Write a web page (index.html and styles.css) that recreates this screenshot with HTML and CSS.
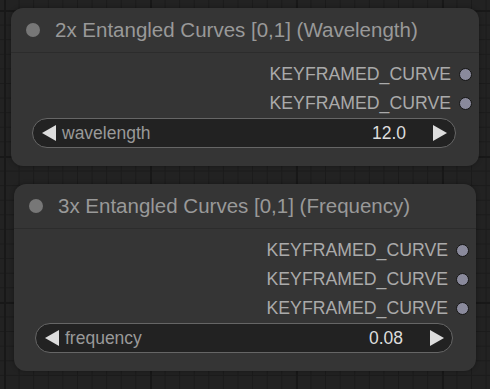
FILE: index.html
```html
<!DOCTYPE html>
<html lang="en">
<head>
  <meta charset="UTF-8">
  <title>nodes</title>
  <link rel="stylesheet" href="styles.css">
</head>
<body>
<div class="canvas">

  <div class="node node-wave">
    <div class="title">
      <span class="title-dot"></span>
      <span class="title-text">2x Entangled Curves [0,1] (Wavelength)</span>
    </div>
    <div class="body">
      <div class="output"><span>KEYFRAMED_CURVE</span><i class="slot"></i></div>
      <div class="output"><span>KEYFRAMED_CURVE</span><i class="slot"></i></div>
      <div class="widget">
        <span class="arrow left"></span>
        <span class="label">wavelength</span>
        <span class="value">12.0</span>
        <span class="arrow right"></span>
      </div>
    </div>
  </div>

  <div class="node node-freq">
    <div class="title">
      <span class="title-dot"></span>
      <span class="title-text">3x Entangled Curves [0,1] (Frequency)</span>
    </div>
    <div class="body">
      <div class="output"><span>KEYFRAMED_CURVE</span><i class="slot"></i></div>
      <div class="output"><span>KEYFRAMED_CURVE</span><i class="slot"></i></div>
      <div class="output"><span>KEYFRAMED_CURVE</span><i class="slot"></i></div>
      <div class="widget">
        <span class="arrow left"></span>
        <span class="label">frequency</span>
        <span class="value">0.08</span>
        <span class="arrow right"></span>
      </div>
    </div>
  </div>

</div>
</body>
</html>
```

FILE: styles.css
```css
* {
  box-sizing: border-box;
  font-family: "Liberation Sans", Arial, sans-serif;
}
html, body {
  margin: 0;
  height: 100%;
}
body {
  background-color: #222;
  background-image:
    linear-gradient(90deg, #181818 2px, transparent 2px),
    linear-gradient(#181818 2px, transparent 2px),
    linear-gradient(90deg, #1b1b1b 1px, transparent 1px),
    linear-gradient(#1b1b1b 1px, transparent 1px);
  background-size: 146px 146px, 146px 146px, 14.6px 14.6px, 14.6px 14.6px;
  background-position: 4px 10px, 4px 10px, 4px 10px, 4px 10px;
  overflow: hidden;
}
.canvas {
  display: flex;
  flex-direction: column;
  padding-top: 8px;
}
.node {
  background: #353535;
  border-radius: 12px;
  box-shadow: 0 0 4px rgba(0,0,0,.35);
}
.node-wave {
  margin-left: 11px;
  width: 468px;
}
.node-freq {
  margin-top: 18px;
  margin-left: 14px;
  width: 462px;
}
.title {
  height: 45px;
  display: flex;
  align-items: center;
  border-bottom: 1px solid #2c2c2c;
}
.title-dot {
  width: 14px;
  height: 14px;
  border-radius: 50%;
  background: #777;
  margin-left: 15px;
}
.title-text {
  margin-left: 15px;
  font-size: 20.5px;
  color: #999;
  white-space: nowrap;
}
.body {
  padding: 7px 23px 18px 21px;
}
.output {
  height: 29px;
  display: flex;
  align-items: center;
  justify-content: flex-end;
  margin-right: -16px;
  font-size: 17.7px;
  color: #aaa;
}
.slot {
  width: 13px;
  height: 13px;
  border-radius: 50%;
  background: #8a8a9c;
  border: 1.5px solid #151515;
  margin-left: 8px;
}
.widget {
  height: 30px;
  border: 1px solid #666;
  border-radius: 15px;
  background: #222;
  display: flex;
  align-items: center;
  padding: 0 8px 0 9px;
  font-size: 17.5px;
}
.label {
  color: #999;
  margin-left: 6px;
  flex: 1;
}
.value {
  color: #ddd;
  margin-right: 27px;
}
.arrow {
  width: 0;
  height: 0;
  border-top: 8px solid transparent;
  border-bottom: 8px solid transparent;
}
.arrow.left {
  border-right: 14px solid #ddd;
}
.arrow.right {
  border-left: 14px solid #ddd;
}
```
